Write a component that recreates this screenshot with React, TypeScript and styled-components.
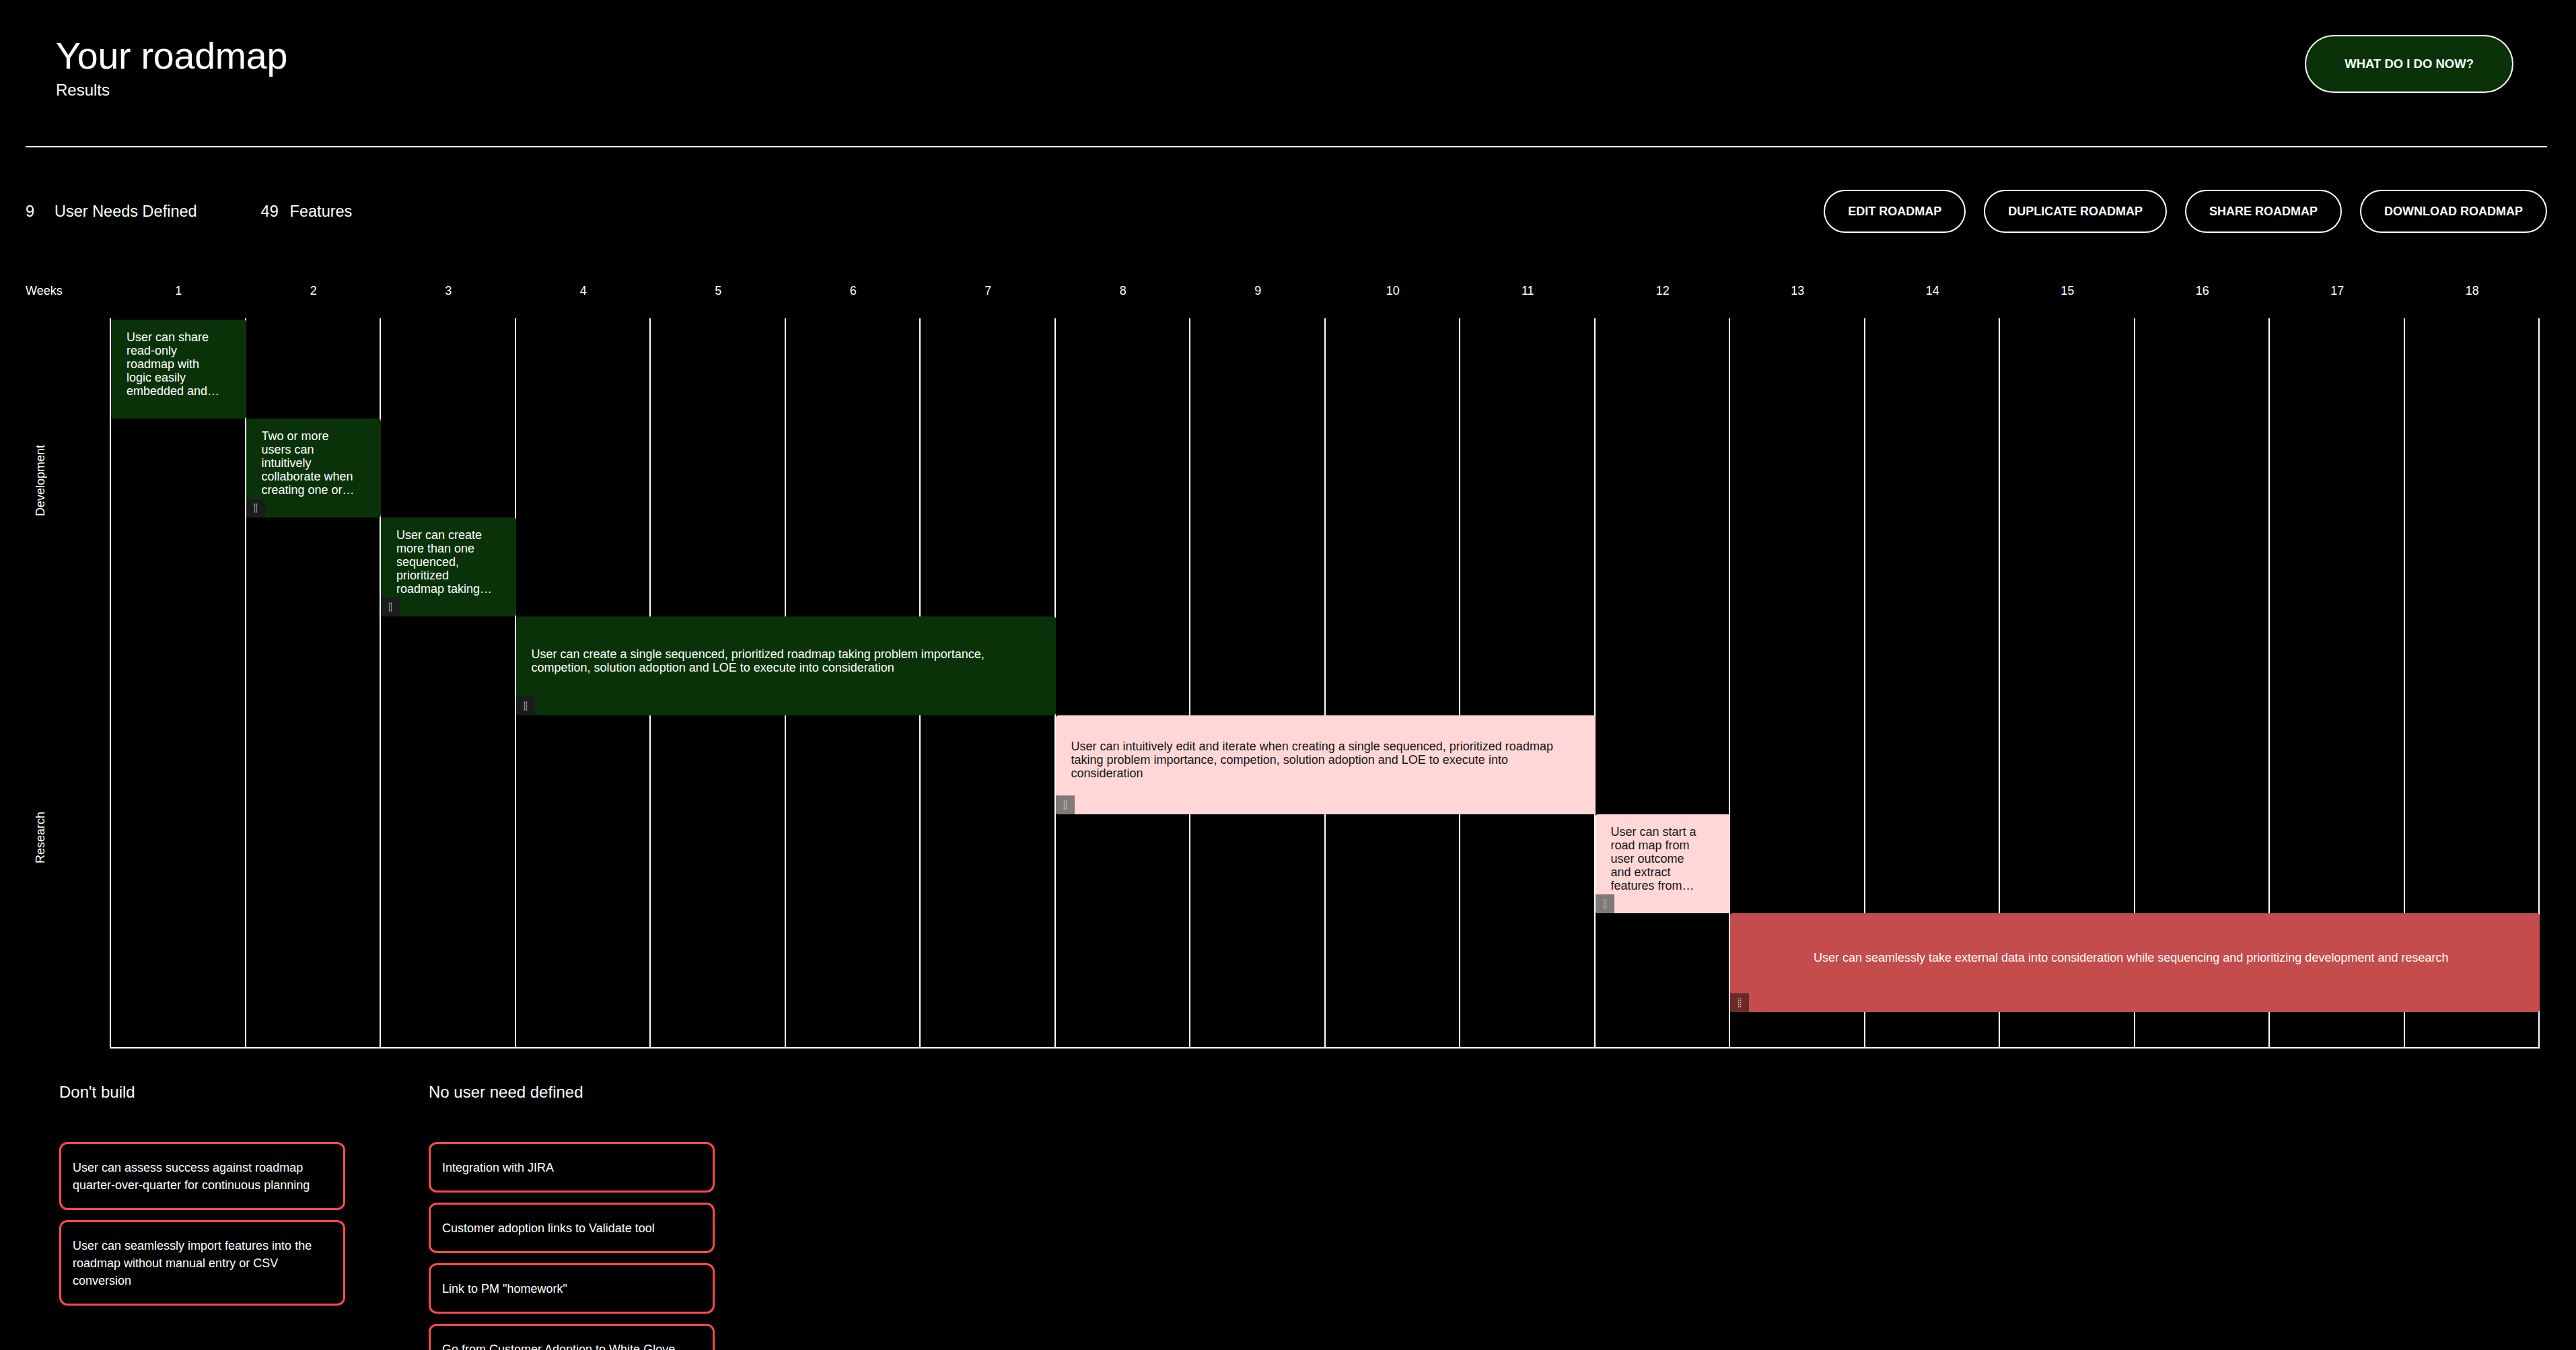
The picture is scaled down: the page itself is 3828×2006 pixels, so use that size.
import React from 'react';
import styled, { createGlobalStyle } from 'styled-components';

type Tone = 'green' | 'pink' | 'red';

const palette: Record<Tone, { bg: string; fg: string; grip: string }> = {
  green: { bg: '#0a3209', fg: '#ffffff', grip: '#1a1c19' },
  pink: { bg: '#ffd7d7', fg: '#161616', grip: '#7e7a77' },
  red: { bg: '#c44c4c', fg: '#ffffff', grip: '#6b2a2a' },
};

const GlobalStyle = createGlobalStyle`
  html, body {
    margin: 0;
    padding: 0;
    background: #000;
  }
  body {
    color: #fff;
    font-family: "Liberation Sans", Arial, Helvetica, sans-serif;
    -webkit-font-smoothing: antialiased;
  }
  *, *::before, *::after {
    box-sizing: border-box;
  }
`;

const Page = styled.main`
  padding: 0 43px 60px 38px;
`;

/* ---------- header ---------- */

const Header = styled.header`
  display: flex;
  justify-content: space-between;
  align-items: flex-start;
  padding: 52px 50px 0 45px;
`;

const TitleBlock = styled.div`
  margin-top: 3px;
`;

const Title = styled.h1`
  margin: 0;
  font-size: 55.5px;
  line-height: 56px;
  font-weight: 400;
  letter-spacing: -0.2px;
`;

const Subtitle = styled.p`
  margin: 8px 0 0;
  font-size: 24px;
  line-height: 29px;
`;

const PrimaryButton = styled.button`
  height: 86px;
  padding: 0 57px;
  border-radius: 43px;
  border: 2px solid #fff;
  background: #0a3209;
  color: #fff;
  font-family: inherit;
  font-weight: 700;
  font-size: 18.5px;
  text-transform: uppercase;
  cursor: pointer;
`;

const Divider = styled.hr`
  margin: 69px 0 0;
  border: 0;
  height: 2px;
  background: #fff;
`;

/* ---------- summary + actions ---------- */

const Toolbar = styled.section`
  display: flex;
  align-items: center;
  justify-content: space-between;
  margin-top: 63px;
`;

const Stats = styled.div`
  display: flex;
  gap: 95px;
`;

const Stat = styled.div`
  display: flex;
  align-items: baseline;
  font-size: 23.5px;
  line-height: 28px;
`;

const StatValue = styled.span`
  min-width: 43px;
`;

const Actions = styled.div`
  display: flex;
  gap: 27px;
`;

const OutlineButton = styled.button`
  height: 64px;
  padding: 0 34px;
  border-radius: 32px;
  border: 2px solid #fff;
  background: transparent;
  color: #fff;
  font-family: inherit;
  font-weight: 700;
  font-size: 18px;
  text-transform: uppercase;
  cursor: pointer;
`;

/* ---------- timeline ---------- */

const Timeline = styled.section`
  margin: 75px 11px 0 0;
`;

const WeekHeader = styled.div`
  display: grid;
  grid-template-columns: 127px repeat(18, 1fr);
  font-size: 18px;
  line-height: 22px;
`;

const WeekCell = styled.div<{ $align?: 'left' | 'center' }>`
  text-align: ${(p) => p.$align ?? 'center'};
`;

const Board = styled.div`
  display: grid;
  grid-template-columns: 125px 1fr;
  margin-top: 30px;
`;

const Lanes = styled.div`
  display: flex;
  flex-direction: column;
`;

const Lane = styled.div<{ $height: number }>`
  height: ${(p) => p.$height}px;
  display: flex;
  align-items: center;
  padding-left: 12px;
`;

const LaneLabel = styled.span`
  writing-mode: vertical-rl;
  transform: rotate(180deg);
  font-size: 18px;
  line-height: 20px;
`;

const Chart = styled.div`
  display: grid;
  grid-template-columns: repeat(18, 1fr);
  grid-template-rows: 2px repeat(7, 147px) 52px;
  border-left: 2px solid #fff;
  border-bottom: 2px solid #fff;
`;

const WeekColumn = styled.div<{ $col: number }>`
  grid-column: ${(p) => p.$col};
  grid-row: 1 / -1;
  border-right: 2px solid #fff;
`;

const Card = styled.div<{ $tone: Tone; $col: number; $span: number; $row: number; $centered?: boolean }>`
  grid-column: ${(p) => `${p.$col} / span ${p.$span}`};
  grid-row: ${(p) => p.$row + 1};
  position: relative;
  z-index: 1;
  display: flex;
  align-items: center;
  padding: 8px 34.5px 23px 23px;
  border-radius: 4px;
  background: ${(p) => palette[p.$tone].bg};
  color: ${(p) => palette[p.$tone].fg};
  font-size: 18px;
  line-height: 20px;
  text-align: ${(p) => (p.$centered ? 'center' : 'left')};
  overflow: hidden;
`;

const CardText = styled.p`
  margin: 0;
  width: 100%;
  display: -webkit-box;
  -webkit-line-clamp: 5;
  -webkit-box-orient: vertical;
  overflow: hidden;
`;

const Grip = styled.span<{ $tone: Tone }>`
  position: absolute;
  left: 0;
  bottom: 0;
  width: 28px;
  height: 28px;
  display: flex;
  align-items: center;
  justify-content: center;
  background: ${(p) => palette[p.$tone].grip};
  border-bottom-left-radius: 4px;
`;

/* ---------- backlog ---------- */

const Backlog = styled.section`
  display: grid;
  grid-template-columns: 425px 425px;
  column-gap: 124px;
  align-items: start;
  margin: 50px 0 0 50px;
`;

const BacklogColumn = styled.div`
  display: flex;
  flex-direction: column;
`;

const BacklogTitle = styled.h2`
  margin: 0 0 60px;
  font-size: 24px;
  line-height: 29px;
  font-weight: 400;
`;

const BacklogList = styled.ul`
  list-style: none;
  margin: 0;
  padding: 0;
  display: flex;
  flex-direction: column;
  gap: 15px;
`;

const BacklogItem = styled.li`
  border: 3px solid #ff4b4b;
  border-radius: 12px;
  padding: 21.5px 17px;
  font-size: 18px;
  line-height: 26px;
`;

/* ---------- data ---------- */

type Need = {
  text: string;
  tone: Tone;
  col: number;
  span: number;
  row: number;
  centered?: boolean;
  draggable?: boolean;
};

const needs: Need[] = [
  {
    text: 'User can share read-only roadmap with logic easily embedded and shared with stakeholders',
    tone: 'green',
    col: 1,
    span: 1,
    row: 1,
    draggable: false,
  },
  {
    text: 'Two or more users can intuitively collaborate when creating one or more roadmaps',
    tone: 'green',
    col: 2,
    span: 1,
    row: 2,
  },
  {
    text: 'User can create more than one sequenced, prioritized roadmap taking problem importance into consideration',
    tone: 'green',
    col: 3,
    span: 1,
    row: 3,
  },
  {
    text: 'User can create a single sequenced, prioritized roadmap taking problem importance, competion, solution adoption and LOE to execute into consideration',
    tone: 'green',
    col: 4,
    span: 4,
    row: 4,
  },
  {
    text: 'User can intuitively edit and iterate when creating a single sequenced, prioritized roadmap taking problem importance, competion, solution adoption and LOE to execute into consideration',
    tone: 'pink',
    col: 8,
    span: 4,
    row: 5,
  },
  {
    text: 'User can start a road map from user outcome and extract features from user needs',
    tone: 'pink',
    col: 12,
    span: 1,
    row: 6,
  },
  {
    text: 'User can seamlessly take external data into consideration while sequencing and prioritizing development and research',
    tone: 'red',
    col: 13,
    span: 6,
    row: 7,
    centered: true,
  },
];

const dontBuild = [
  'User can assess success against roadmap quarter-over-quarter for continuous planning',
  'User can seamlessly import features into the roadmap without manual entry or CSV conversion',
];

const unassigned = [
  'Integration with JIRA',
  'Customer adoption links to Validate tool',
  'Link to PM "homework"',
  'Go from Customer Adoption to White Glove',
];

const weeks = Array.from({ length: 18 }, (_, i) => i + 1);

const GripDots = () => (
  <svg width="6" height="14" viewBox="0 0 6 14" aria-hidden="true">
    {[1.2, 4, 7, 10, 12.8].map((y) =>
      [1.5, 4.5].map((x) => (
        <rect key={`${x}-${y}`} x={x - 0.7} y={y - 0.7} width="1.4" height="1.4" fill="#dcdcdc" />
      )),
    )}
  </svg>
);

export default function App() {
  return (
    <>
      <GlobalStyle />
      <Page>
        <Header>
          <TitleBlock>
            <Title>Your roadmap</Title>
            <Subtitle>Results</Subtitle>
          </TitleBlock>
          <PrimaryButton>What do I do now?</PrimaryButton>
        </Header>

        <Divider />

        <Toolbar>
          <Stats>
            <Stat>
              <StatValue>9</StatValue>
              User Needs Defined
            </Stat>
            <Stat>
              <StatValue>49</StatValue>
              Features
            </Stat>
          </Stats>
          <Actions>
            <OutlineButton>Edit roadmap</OutlineButton>
            <OutlineButton>Duplicate roadmap</OutlineButton>
            <OutlineButton>Share roadmap</OutlineButton>
            <OutlineButton>Download roadmap</OutlineButton>
          </Actions>
        </Toolbar>

        <Timeline>
          <WeekHeader>
            <WeekCell $align="left">Weeks</WeekCell>
            {weeks.map((w) => (
              <WeekCell key={w}>{w}</WeekCell>
            ))}
          </WeekHeader>

          <Board>
            <Lanes>
              <Lane $height={482}>
                <LaneLabel>Development</LaneLabel>
              </Lane>
              <Lane $height={580}>
                <LaneLabel>Research</LaneLabel>
              </Lane>
            </Lanes>

            <Chart>
              {weeks.map((w) => (
                <WeekColumn key={w} $col={w} />
              ))}
              {needs.map((n) => (
                <Card
                  key={n.text}
                  $tone={n.tone}
                  $col={n.col}
                  $span={n.span}
                  $row={n.row}
                  $centered={n.centered}
                >
                  <CardText>{n.text}</CardText>
                  {n.draggable !== false && (
                    <Grip $tone={n.tone}>
                      <GripDots />
                    </Grip>
                  )}
                </Card>
              ))}
            </Chart>
          </Board>
        </Timeline>

        <Backlog>
          <BacklogColumn>
            <BacklogTitle>Don't build</BacklogTitle>
            <BacklogList>
              {dontBuild.map((t) => (
                <BacklogItem key={t}>{t}</BacklogItem>
              ))}
            </BacklogList>
          </BacklogColumn>
          <BacklogColumn>
            <BacklogTitle>No user need defined</BacklogTitle>
            <BacklogList>
              {unassigned.map((t) => (
                <BacklogItem key={t}>{t}</BacklogItem>
              ))}
            </BacklogList>
          </BacklogColumn>
        </Backlog>
      </Page>
    </>
  );
}
